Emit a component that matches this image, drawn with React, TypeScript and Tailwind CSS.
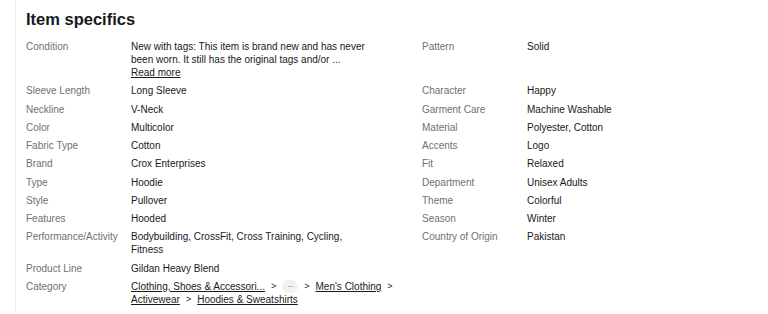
import React from "react";

type Spec = { label: string; value: string };

const left: Spec[] = [
  {
    label: "Condition",
    value:
      "New with tags: This item is brand new and has never been worn. It still has the original tags and/or\u00a0...",
  },
  { label: "Sleeve Length", value: "Long Sleeve" },
  { label: "Neckline", value: "V-Neck" },
  { label: "Color", value: "Multicolor" },
  { label: "Fabric Type", value: "Cotton" },
  { label: "Brand", value: "Crox Enterprises" },
  { label: "Type", value: "Hoodie" },
  { label: "Style", value: "Pullover" },
  { label: "Features", value: "Hooded" },
  {
    label: "Performance/Activity",
    value: "Bodybuilding, CrossFit, Cross Training, Cycling, Fitness",
  },
  { label: "Product Line", value: "Gildan Heavy Blend" },
];

const right: Spec[] = [
  { label: "Pattern", value: "Solid" },
  { label: "Character", value: "Happy" },
  { label: "Garment Care", value: "Machine Washable" },
  { label: "Material", value: "Polyester, Cotton" },
  { label: "Accents", value: "Logo" },
  { label: "Fit", value: "Relaxed" },
  { label: "Department", value: "Unisex Adults" },
  { label: "Theme", value: "Colorful" },
  { label: "Season", value: "Winter" },
  { label: "Country of Origin", value: "Pakistan" },
];

const crumbs = [
  "Clothing, Shoes & Accessori...",
  "···",
  "Men's Clothing",
  "Activewear",
  "Hoodies & Sweatshirts",
];

function Pair({ spec, first }: { spec?: Spec; first?: boolean }) {
  if (!spec) return <div />;
  return (
    <div className="flex">
      <div className="w-[105px] shrink-0 text-[#707070]">{spec.label}</div>
      <div className="w-[240px] text-[#191919]">
        {spec.value}
        {first && (
          <div>
            <a href="#" className="underline">
              Read more
            </a>
          </div>
        )}
      </div>
    </div>
  );
}

function Category() {
  return (
    <div className="flex">
      <div className="w-[105px] shrink-0 text-[#707070]">Category</div>
      <div className="flex w-[275px] flex-wrap text-[#191919]">
        {crumbs.map((c, i) => (
          <span key={c} className="flex items-center whitespace-nowrap">
            {c === "···" ? (
              <span className="flex h-[13px] w-[16px] items-center justify-center rounded-full bg-[#f2f2f2] text-[8px] tracking-[-0.5px] text-[#555]">
                ···
              </span>
            ) : (
              <a href="#" className="underline">
                {c}
              </a>
            )}
            {i < crumbs.length - 1 && (
              <span className="mx-[6px] text-[9px]">&gt;</span>
            )}
          </span>
        ))}
      </div>
    </div>
  );
}

export default function App() {
  return (
    <div
      className="h-[314px] w-[768px] overflow-hidden bg-white pl-[15px]"
      style={{ fontFamily: '"Liberation Sans", Arial, sans-serif' }}
    >
      <div className="h-full border-l border-[#f0f0f0] pl-[10px]">
        <h2 className="pt-[7px] text-[16.5px] font-bold leading-[24px] text-[#191919]">
          Item specifics
        </h2>
        <div className="mt-[9px] grid grid-cols-[396px_1fr] gap-y-[5.25px] text-[10px] leading-[13px]">
          {left.map((spec, i) => (
            <React.Fragment key={spec.label}>
              <Pair spec={spec} first={i === 0} />
              <Pair spec={right[i]} />
            </React.Fragment>
          ))}
          <Category />
          <div />
        </div>
      </div>
    </div>
  );
}
